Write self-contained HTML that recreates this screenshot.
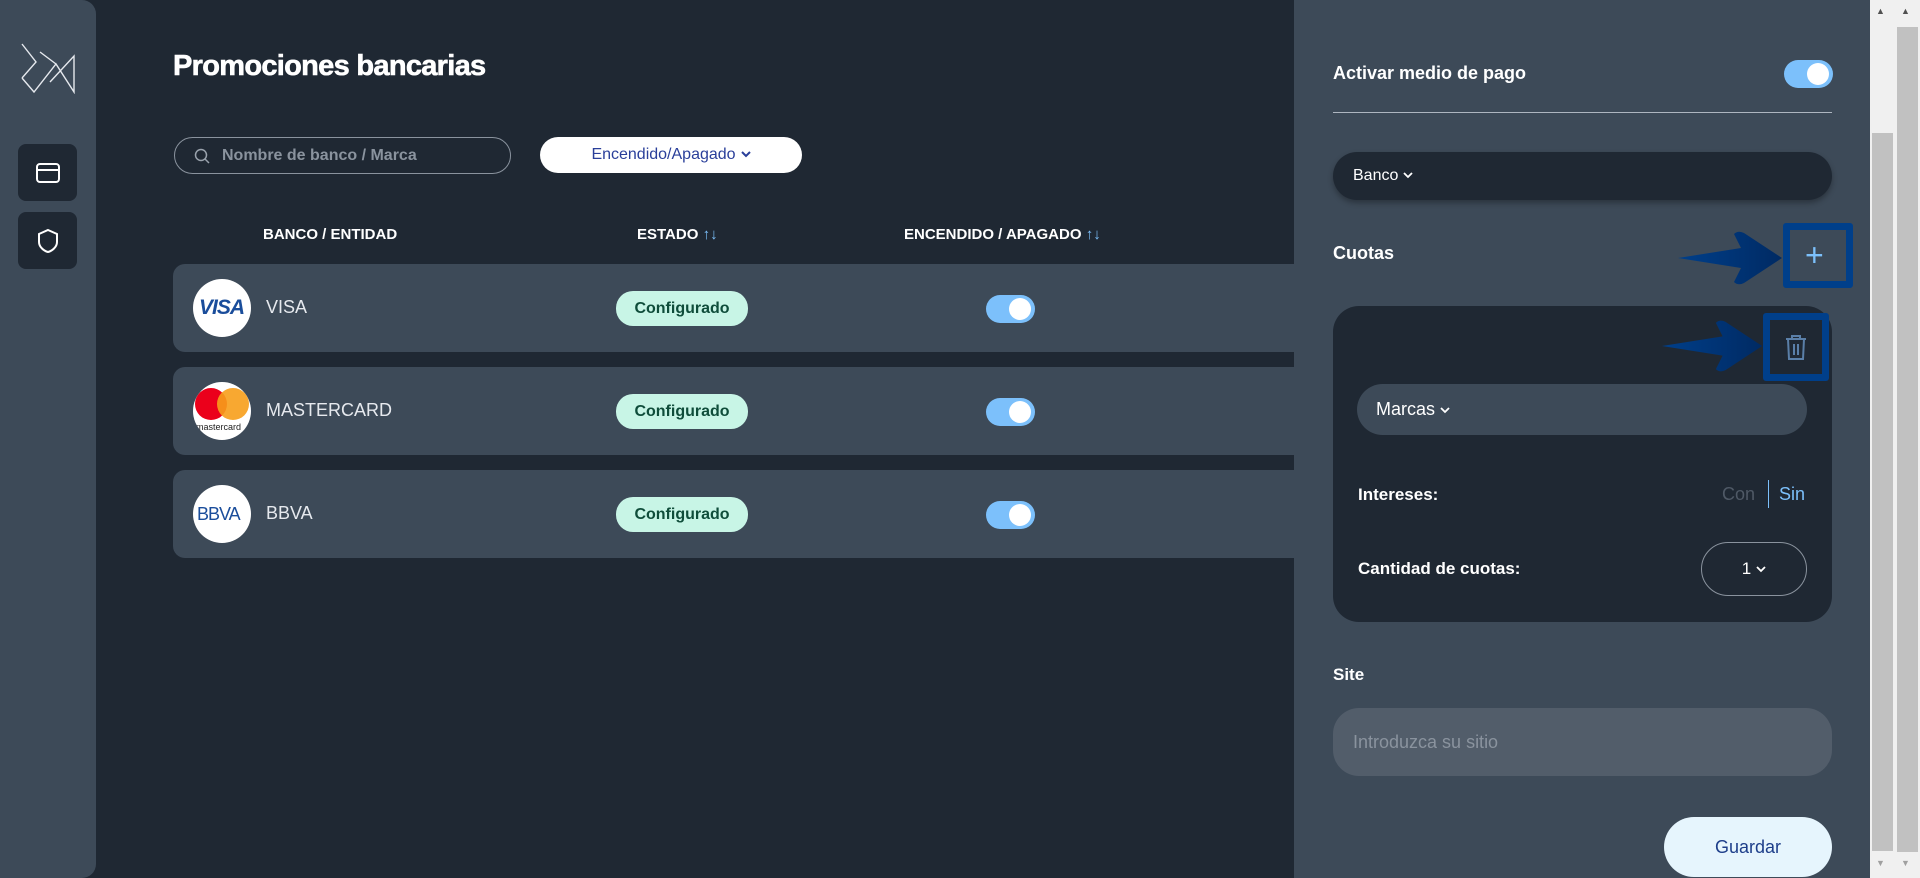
<!DOCTYPE html>
<html><head><meta charset="utf-8"><style>
*{margin:0;padding:0;box-sizing:border-box}
body{width:1920px;height:878px;overflow:hidden;background:#1f2833;font-family:"Liberation Sans",sans-serif;position:relative;color:#fff}
.a{position:absolute}
.side{left:0;top:0;width:96px;height:878px;background:#3d4a58;border-radius:0 14px 14px 0}
.ib{left:18px;width:59px;height:57px;background:#1f2833;border-radius:8px;display:flex;align-items:center;justify-content:center}
.h{font-weight:bold;font-size:15px;top:226px}
.row{left:173px;width:1125px;height:88px;background:#3d4a58;border-radius:12px 0 0 12px}
.logo{left:20px;top:15px;width:58px;height:58px;border-radius:50%;background:#fff;overflow:hidden}
.nm{left:93px;top:33px;font-size:18px;color:#e6e9ee}
.badge{left:443px;top:27px;width:132px;height:35px;border-radius:17px;background:#c8f5e6;color:#0f4d3a;font-weight:bold;font-size:16px;text-align:center;line-height:35px}
.tg{width:49px;height:28px;border-radius:14px;background:#7cc0fb}
.tg:after{content:"";position:absolute;right:4px;top:3px;width:22px;height:22px;border-radius:50%;background:#fff}
.panel{left:1294px;top:0;width:576px;height:878px;background:#3d4a58}
.lb{font-weight:bold;font-size:18px}
.cv{display:inline-block;width:10px;height:7px;margin-left:5px;vertical-align:middle}
</style></head><body>
<div class="a side">
 <svg class="a" style="left:20px;top:42px" width="58" height="52" viewBox="0 0 58 52" fill="none" stroke="#e6e9ee" stroke-width="1.4"><path d="M2 2 L16 20 L2 36 M2 36 L14 50 L36 22 L54 50 L54 14 L30 40 M20 10 L36 22"/></svg>
</div>
<div class="a ib" style="top:144px"><svg width="26" height="22" viewBox="0 0 26 22" fill="none" stroke="#fff" stroke-width="2"><rect x="2" y="2" width="22" height="18" rx="3"/><path d="M2 8h22"/></svg></div>
<div class="a ib" style="top:212px"><svg width="22" height="26" viewBox="0 0 22 26" fill="none" stroke="#fff" stroke-width="2"><path d="M11 2 L20 6 V14 C20 19 15 23 11 24 C7 23 2 19 2 14 V6 Z"/></svg></div>

<div class="a" style="left:173px;top:50px;font-size:29px;font-weight:900;letter-spacing:-0.7px;-webkit-text-stroke:0.6px #fff">Promociones bancarias</div>
<div class="a" style="left:174px;top:137px;width:337px;height:37px;border:1px solid #8a939e;border-radius:19px">
 <svg class="a" style="left:19px;top:10px" width="16" height="16" viewBox="0 0 16 16" fill="none" stroke="#9aa3ad" stroke-width="1.5"><circle cx="7" cy="7" r="5.5"/><path d="M11 11l4 4"/></svg>
 <div class="a" style="left:47px;top:9px;font-size:16px;font-weight:bold;color:#8a939e">Nombre de banco / Marca</div>
</div>
<div class="a" style="left:540px;top:137px;width:262px;height:36px;background:#fff;border-radius:18px;color:#2a3f9a;font-size:16px;text-align:center;line-height:36px">Encendido/Apagado<svg class="cv" viewBox="0 0 10 7"><path d="M1 1l4 4 4-4" fill="none" stroke="#2a3f9a" stroke-width="2"/></svg></div>

<div class="a h" style="left:263px">BANCO / ENTIDAD</div>
<div class="a h" style="left:637px">ESTADO <span style="color:#7cc0fb">&#8593;&#8595;</span></div>
<div class="a h" style="left:904px">ENCENDIDO / APAGADO <span style="color:#7cc0fb">&#8593;&#8595;</span></div>

<div class="a row" style="top:264px">
 <div class="a logo"><div class="a" style="left:6px;top:17px;font-size:21px;font-weight:bold;font-style:italic;color:#1a4d9b;letter-spacing:-1px">VISA</div></div>
 <div class="a nm">VISA</div><div class="a badge">Configurado</div><div class="a tg" style="left:813px;top:31px"></div>
</div>
<div class="a row" style="top:367px">
 <div class="a logo"><div class="a" style="left:2px;top:6px;width:32px;height:32px;border-radius:50%;background:#eb001b"></div><div class="a" style="left:24px;top:6px;width:32px;height:32px;border-radius:50%;background:#f79e1b;opacity:.9"></div><div class="a" style="left:3px;top:40px;font-size:9px;color:#222">mastercard</div></div>
 <div class="a nm">MASTERCARD</div><div class="a badge">Configurado</div><div class="a tg" style="left:813px;top:31px"></div>
</div>
<div class="a row" style="top:470px">
 <div class="a logo"><div class="a" style="left:4px;top:19px;font-size:18px;color:#1a4d9b;letter-spacing:-1px">BBVA</div></div>
 <div class="a nm">BBVA</div><div class="a badge">Configurado</div><div class="a tg" style="left:813px;top:31px"></div>
</div>

<div class="a panel"></div>
<div class="a lb" style="left:1333px;top:63px">Activar medio de pago</div>
<div class="a tg" style="left:1784px;top:60px"></div>
<div class="a" style="left:1333px;top:112px;width:499px;height:1px;background:#aeb6c0"></div>
<div class="a" style="left:1333px;top:152px;width:499px;height:48px;background:#1f2833;border-radius:24px;box-shadow:0 3px 6px rgba(0,0,0,.3);font-size:16px;line-height:48px;padding-left:20px">Banco<svg class="cv" viewBox="0 0 10 7"><path d="M1 1l4 4 4-4" fill="none" stroke="#fff" stroke-width="1.8"/></svg></div>
<div class="a lb" style="left:1333px;top:243px">Cuotas</div>
<div class="a" style="left:1783px;top:223px;width:70px;height:65px;border:7px solid #003f8a;border-radius:3px"></div>
<div class="a" style="left:1805px;top:237px;font-size:32px;color:#7cc0fb;line-height:36px">+</div>
<svg class="a" style="left:1676px;top:228px" width="110" height="60" viewBox="0 0 110 60"><defs><linearGradient id="g" x1="0" x2="1"><stop offset="0" stop-color="#003f8a"/><stop offset="1" stop-color="#002a63"/></linearGradient></defs><path d="M2 30 L65 20 L58 6 Q62 2 68 5 L106 30 L68 55 Q62 58 58 54 L65 40 Z" fill="url(#g)"/></svg>

<div class="a" style="left:1333px;top:306px;width:499px;height:316px;background:#1f2833;border-radius:26px"></div>
<div class="a" style="left:1763px;top:313px;width:66px;height:68px;border:7px solid #003f8a;border-radius:3px"></div>
<svg class="a" style="left:1783px;top:333px" width="26" height="28" viewBox="0 0 26 28" fill="none" stroke="#5a7fa8" stroke-width="2"><path d="M3 6h20M9 6V3h8v3M5 6l1 20h14l1-20M11 11v11M15 11v11"/></svg>
<svg class="a" style="left:1660px;top:316px" width="106" height="60" viewBox="0 0 110 60"><path d="M2 30 L65 20 L58 6 Q62 2 68 5 L106 30 L68 55 Q62 58 58 54 L65 40 Z" fill="url(#g)"/></svg>
<div class="a" style="left:1357px;top:384px;width:450px;height:51px;background:#3d4a58;border-radius:26px;font-size:18px;line-height:51px;padding-left:19px">Marcas<svg class="cv" viewBox="0 0 10 7"><path d="M1 1l4 4 4-4" fill="none" stroke="#fff" stroke-width="1.8"/></svg></div>
<div class="a lb" style="left:1358px;top:485px;font-size:17px">Intereses:</div>
<div class="a" style="left:1722px;top:484px;font-size:18px;color:#4f5966">Con</div>
<div class="a" style="left:1768px;top:480px;width:1px;height:28px;background:#7cc0fb"></div>
<div class="a" style="left:1779px;top:484px;font-size:18px;color:#7cc0fb">Sin</div>
<div class="a lb" style="left:1358px;top:559px;font-size:17px">Cantidad de cuotas:</div>
<div class="a" style="left:1701px;top:542px;width:106px;height:54px;border:1px solid #8a939e;border-radius:27px;text-align:center;line-height:52px;font-size:17px">1<svg class="cv" viewBox="0 0 10 7"><path d="M1 1l4 4 4-4" fill="none" stroke="#fff" stroke-width="1.8"/></svg></div>
<div class="a lb" style="left:1333px;top:665px;font-size:17px">Site</div>
<div class="a" style="left:1333px;top:708px;width:499px;height:68px;background:#525d6a;border-radius:26px;font-size:18px;line-height:68px;padding-left:20px;color:#8a939e">Introduzca su sitio</div>
<div class="a" style="left:1664px;top:817px;width:168px;height:60px;background:#e6f5fd;border-radius:30px;color:#1d3e8a;font-size:18px;text-align:center;line-height:60px">Guardar</div>

<div class="a" style="left:1870px;top:0;width:50px;height:878px;background:#f0f0f0"></div>
<div class="a" style="left:1872px;top:133px;width:21px;height:718px;background:#c1c1c1"></div>
<div class="a" style="left:1897px;top:27px;width:21px;height:825px;background:#c1c1c1"></div>
<div class="a" style="left:1876px;top:6px;font-size:9px;color:#505050">&#9650;</div>
<div class="a" style="left:1901px;top:6px;font-size:9px;color:#505050">&#9650;</div>
<div class="a" style="left:1876px;top:858px;font-size:9px;color:#a0a0a0">&#9660;</div>
<div class="a" style="left:1901px;top:858px;font-size:9px;color:#a0a0a0">&#9660;</div>
</body></html>
